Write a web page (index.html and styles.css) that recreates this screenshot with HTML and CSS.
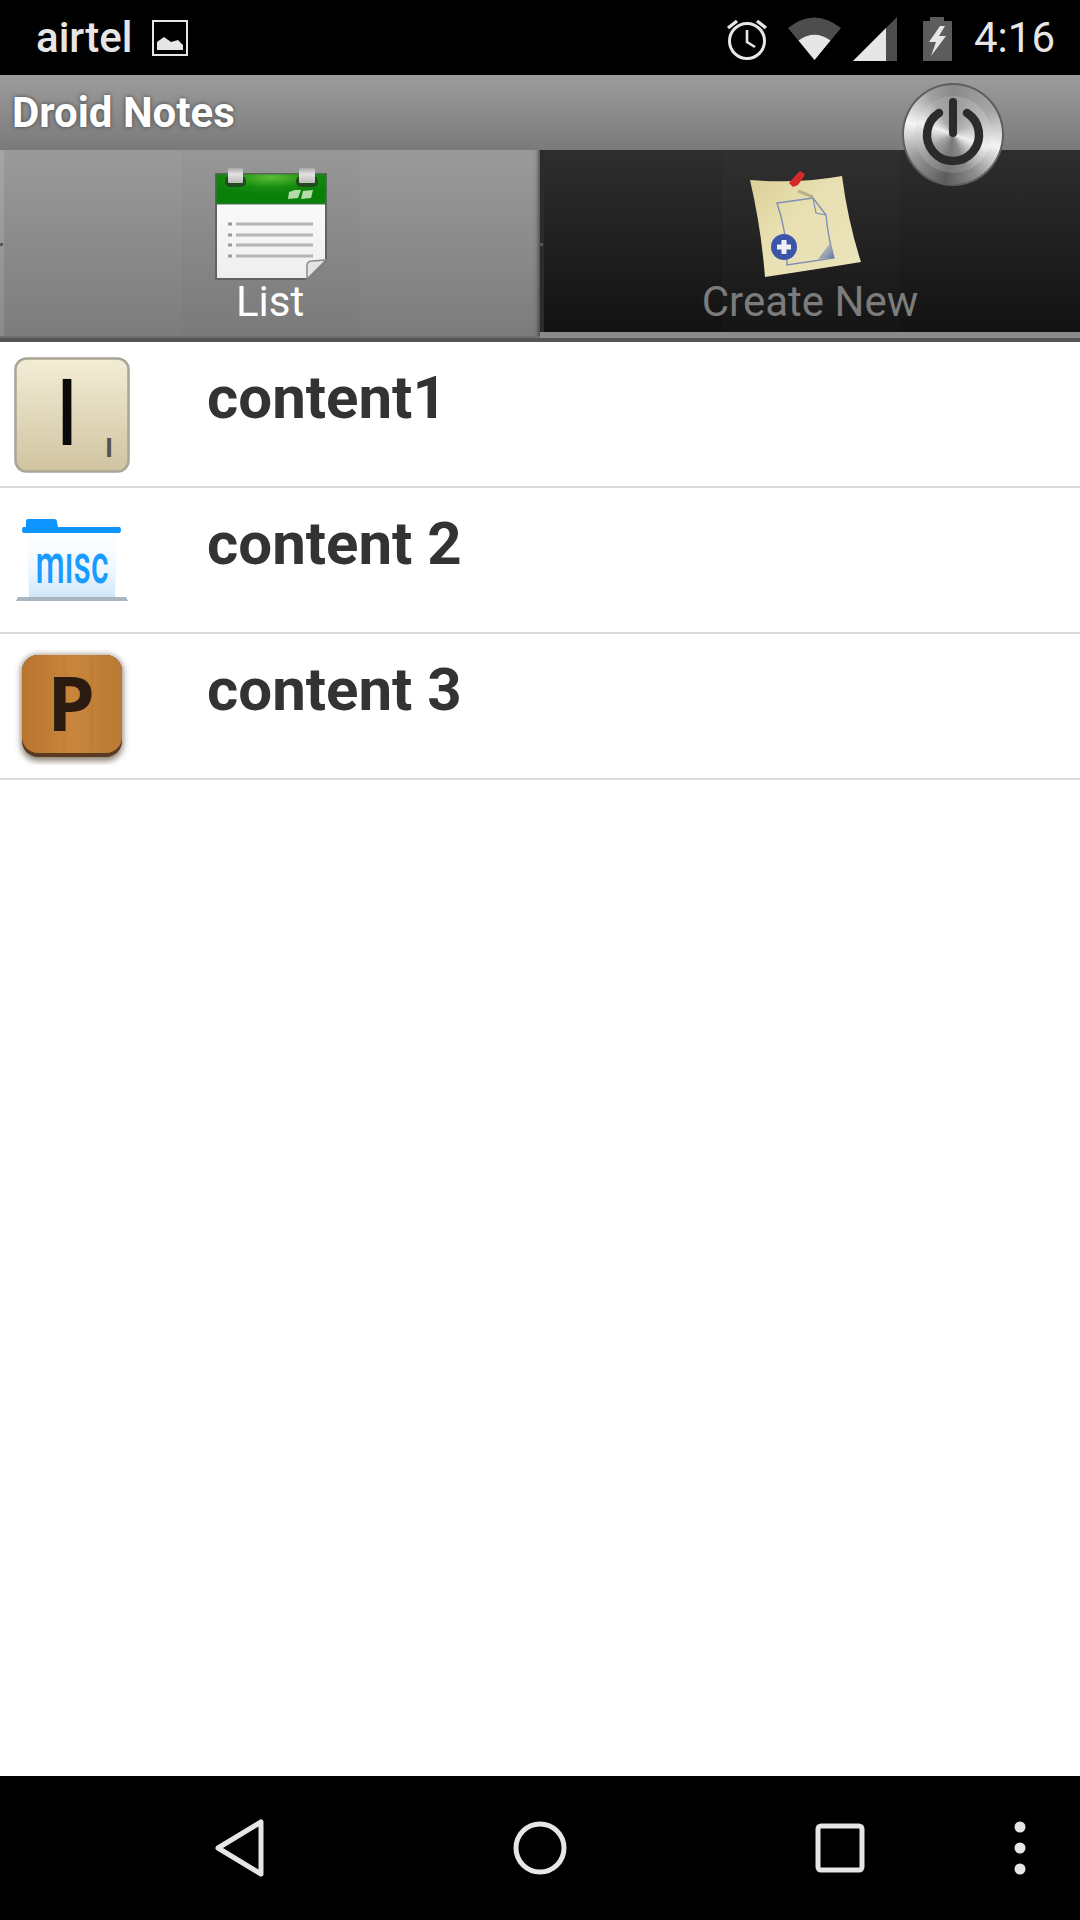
FILE: index.html
```html
<!DOCTYPE html>
<html lang="en">
<head>
    <meta charset="UTF-8">
    <meta name="viewport" content="width=device-width, initial-scale=1.0">
    <title>Droid Notes</title>
    <link rel="stylesheet" href="styles.css">
</head>
<body>
    <div class="phone">
        <header class="status-bar">
            <div class="status-left">
                <span class="carrier">airtel</span>
                <svg class="picture-icon" width="36" height="36" viewBox="0 0 36 36">
                    <rect x="1" y="1" width="34" height="34" fill="none" stroke="#e6e6e6" stroke-width="2"/>
                    <path d="M5 30V22L12 17L19 22L26 20L31 25V30Z" fill="#e6e6e6"/>
                </svg>
            </div>
            <div class="status-right">
                <svg class="alarm-icon" width="44" height="44" viewBox="0 0 44 44">
                    <circle cx="22" cy="24" r="17.5" fill="none" stroke="#e6e6e6" stroke-width="3"/>
                    <path d="M22 13V25L30 30" fill="none" stroke="#e6e6e6" stroke-width="2.6"/>
                    <path d="M3 11L12 4M41 11L32 4" stroke="#e6e6e6" stroke-width="3.4"/>
                </svg>
                <svg class="wifi-icon" width="53" height="44" viewBox="0 0 53 44">
                    <path d="M0 11Q26 -10 53 11L26.5 43Z" fill="#4d4d4d"/>
                    <path d="M10.5 23.5Q26.5 12 42.5 23.5L26.5 43Z" fill="#e6e6e6"/>
                </svg>
                <svg class="signal-icon" width="44" height="44" viewBox="0 0 44 44">
                    <path d="M0 44L44 0V44Z" fill="#4d4d4d"/>
                    <path d="M0 44L33 11V44Z" fill="#e6e6e6"/>
                </svg>
                <svg class="battery-icon" width="29" height="44" viewBox="0 0 29 44">
                    <path d="M7 0H21V4H29V44H0V4H7Z" fill="#5c5c5c"/>
                    <path d="M17 9L6 25H13L8 39L23 19H16L22 9Z" fill="#e6e6e6"/>
                </svg>
                <span class="clock">4:16</span>
            </div>
        </header>

        <div class="title-bar">
            <h1>Droid Notes</h1>
        </div>

        <!-- sits on the line between title bar and tabs -->
        <div class="power-button">
            <div class="power-face">
                <svg width="70" height="82" viewBox="0 0 70 82">
                    <path d="M21 19A26 26 0 1 0 49 19" fill="none" stroke="#2b2b2b" stroke-width="8.5" stroke-linecap="round"/>
                    <path d="M35 8V39" fill="none" stroke="#2b2b2b" stroke-width="8" stroke-linecap="round"/>
                </svg>
            </div>
        </div>

        <nav class="tabs">
            <div class="tab tab-active">
                <svg class="tab-icon" width="116" height="116" viewBox="0 0 116 116">
                    <defs>
                        <radialGradient id="calGreen" cx="0.5" cy="0.1" r="0.6">
                            <stop offset="0" stop-color="#5cbf33"/>
                            <stop offset="0.6" stop-color="#158c10"/>
                            <stop offset="1" stop-color="#0b8008"/>
                        </radialGradient>
                        <linearGradient id="calPage" x1="0" y1="0" x2="0" y2="1">
                            <stop offset="0" stop-color="#ffffff"/>
                            <stop offset="1" stop-color="#eeeeee"/>
                        </linearGradient>
                        <linearGradient id="calClip" x1="0" y1="0" x2="0" y2="1">
                            <stop offset="0" stop-color="#a8a8a8"/>
                            <stop offset="0.4" stop-color="#e2e2e2"/>
                            <stop offset="1" stop-color="#bdbdbd"/>
                        </linearGradient>
                    </defs>
                    <g class="soft-edge">
                        <path d="M4 7H114V93L95 112H4Z" fill="url(#calPage)" stroke="#636363" stroke-width="2"/>
                        <path d="M4 7H114V37H4Z" fill="url(#calGreen)" stroke="#4d6a4a" stroke-width="1"/>
                        <rect x="13" y="9" width="21" height="11" rx="5" fill="#23491f"/>
                        <rect x="84" y="9" width="22" height="11" rx="5" fill="#23491f"/>
                        <rect x="16" y="1" width="15" height="15" rx="1" fill="url(#calClip)"/>
                        <rect x="87" y="1" width="16" height="15" rx="1" fill="url(#calClip)"/>
                        <path d="M77 25L83 23H89L86 31L76 32ZM91 24L101 23L99 31L89 32Z" fill="#b5dba9"/>
                        <path d="M24 57H101M24 68H101M24 78H101M24 89H101" stroke="#b4b6b4" stroke-width="3"/>
                        <path d="M16 57H20M16 68H20M16 78H20M16 89H20" stroke="#9a9a9a" stroke-width="3"/>
                        <path d="M114 93L95 112V99Q95 94 100 94Z" fill="#e4e4e4" stroke="#8a8a8a" stroke-width="1.5"/>
                    </g>
                </svg>
                <span class="tab-label">List</span>
            </div>
            <div class="tab">
                <svg class="tab-icon" width="124" height="116" viewBox="0 0 124 116">
                    <defs>
                        <linearGradient id="noteFill" x1="0" y1="0" x2="1" y2="1">
                            <stop offset="0" stop-color="#dccf96"/>
                            <stop offset="0.4" stop-color="#e8e0b2"/>
                            <stop offset="1" stop-color="#ece4bb"/>
                        </linearGradient>
                        <linearGradient id="noteHatch" x1="0" y1="0" x2="1" y2="1">
                            <stop offset="0" stop-color="#e8e0b2"/>
                            <stop offset="1" stop-color="#5f74ad"/>
                        </linearGradient>
                    </defs>
                    <g class="soft-edge">
                        <path d="M2 13Q50 17 94 9Q100 55 113 95Q70 102 17 110Q13 60 2 13Z" fill="url(#noteFill)"/>
                        <path d="M50 24L65 30" stroke="#b9b08c" stroke-width="3"/>
                        <path d="M29 36L65 31L78 48Q80 70 86 91L39 98Q39 65 29 36Z" fill="none" stroke="#7e8db4" stroke-width="1.4"/>
                        <path d="M65 31L68 46L78 48" fill="none" stroke="#7e8db4" stroke-width="1.2"/>
                        <path d="M70 92L82 76L86 91Z" fill="url(#noteHatch)"/>
                        <circle cx="36" cy="80" r="13" fill="#3d55a8"/>
                        <path d="M36 73V87M29 80H43" stroke="#eef0f5" stroke-width="5"/>
                        <path d="M41 16L47 9L52 4L57 7L55 11L50 18L45 20Z" fill="#d62a2a"/>
                    </g>
                </svg>
                <span class="tab-label">Create New</span>
            </div>
        </nav>

        <main class="note-list">
            <div class="note-row">
                <div class="note-thumb">
                    <svg width="116" height="116" viewBox="0 0 116 116">
                        <defs>
                            <linearGradient id="tileCream" x1="0" y1="0" x2="0" y2="1">
                                <stop offset="0" stop-color="#f3edd6"/>
                                <stop offset="1" stop-color="#d0c3a0"/>
                            </linearGradient>
                        </defs>
                        <rect x="1.5" y="1.5" width="113" height="113" rx="11" fill="url(#tileCream)" stroke="#a8a596" stroke-width="2.5"/>
                        <text class="tile-letter" x="53" y="88" text-anchor="middle">I</text>
                        <text class="tile-score" x="95" y="100" text-anchor="middle">I</text>
                    </svg>
                </div>
                <div class="note-title">content1</div>
            </div>
            <div class="note-row">
                <div class="note-thumb">
                    <svg width="116" height="116" viewBox="0 0 116 116">
                        <defs>
                            <linearGradient id="folderFill" x1="0" y1="0" x2="0" y2="1">
                                <stop offset="0" stop-color="#ffffff"/>
                                <stop offset="0.6" stop-color="#eef7fe"/>
                                <stop offset="1" stop-color="#cfe6f8"/>
                            </linearGradient>
                        </defs>
                        <path d="M13 30H103L101 94H15Z" fill="url(#folderFill)"/>
                        <path class="soft-edge" d="M4 94H112L114 98H2Z" fill="#a9b6c2"/>
                        <path d="M12 18Q12 16 14 16H40Q43 16 43 19L44 24H106Q108 27 106 30H9Q7 27 9 24H12Z" fill="#0f95ff"/>
                        <text class="folder-text" transform="translate(58 80) scale(0.8 1.33)" text-anchor="middle">mısc</text>
                    </svg>
                </div>
                <div class="note-title">content 2</div>
            </div>
            <div class="note-row">
                <div class="note-thumb">
                    <svg width="116" height="116" viewBox="0 0 116 116">
                        <defs>
                            <linearGradient id="woodFill" x1="0" y1="0" x2="1" y2="0">
                                <stop offset="0" stop-color="#b8752f"/>
                                <stop offset="0.5" stop-color="#c9853c"/>
                                <stop offset="1" stop-color="#b97a35"/>
                            </linearGradient>
                        </defs>
                        <rect class="soft-shadow" x="7" y="6" width="102" height="106" rx="17" fill="#8a8074"/>
                        <rect x="8" y="6" width="100" height="102" rx="16" fill="#5a3a20"/>
                        <rect x="8" y="6" width="100" height="98" rx="16" fill="url(#woodFill)"/>
                        <path d="M28 8V102M50 8V102M78 8V102M92 8V102" stroke="#a9682a" stroke-width="1" opacity="0.4"/>
                        <text class="wood-letter" x="57" y="82" text-anchor="middle">P</text>
                    </svg>
                </div>
                <div class="note-title">content 3</div>
            </div>
        </main>

        <footer class="nav-bar">
            <svg width="50" height="58" viewBox="0 0 50 58">
                <path d="M46 3V55L3 29Z" fill="none" stroke="#e6e6e6" stroke-width="5" stroke-linejoin="round"/>
            </svg>
            <svg width="54" height="54" viewBox="0 0 54 54">
                <circle cx="27" cy="27" r="24" fill="none" stroke="#e6e6e6" stroke-width="5"/>
            </svg>
            <svg width="50" height="50" viewBox="0 0 50 50">
                <rect x="3" y="3" width="44" height="44" rx="3" fill="none" stroke="#e6e6e6" stroke-width="5"/>
            </svg>
            <svg width="12" height="54" viewBox="0 0 12 54">
                <circle cx="6" cy="6" r="5.5" fill="#e6e6e6"/>
                <circle cx="6" cy="27" r="5.5" fill="#e6e6e6"/>
                <circle cx="6" cy="48" r="5.5" fill="#e6e6e6"/>
            </svg>
        </footer>
    </div>
</body>
</html>
```

FILE: styles.css
```css
* {
    margin: 0;
    padding: 0;
    box-sizing: border-box;
}

body {
    font-family: Roboto, "Liberation Sans", sans-serif;
    background-color: #fff;
}

.phone {
    position: relative;
    display: flex;
    flex-direction: column;
    width: 1080px;
    height: 1920px;
    overflow: hidden;
}

/* status bar */
.status-bar {
    display: flex;
    justify-content: space-between;
    align-items: center;
    height: 75px;
    padding: 0 25px 0 36px;
    background-color: #000;
    color: #e6e6e6;
}

.status-left,
.status-right {
    display: flex;
    align-items: center;
}

.carrier {
    font-size: 42px;
    font-weight: 500;
}

.picture-icon {
    margin-left: 20px;
    margin-top: 1px;
}

.alarm-icon {
    margin-right: 19px;
    margin-top: 2px;
}

.wifi-icon {
    margin-right: 12px;
    margin-top: 2px;
}

.signal-icon {
    margin-right: 26px;
    margin-top: 2px;
}

.battery-icon {
    margin-right: 22px;
    margin-top: 2px;
}

.clock {
    font-size: 42px;
}

/* title bar */
.title-bar {
    display: flex;
    align-items: center;
    height: 75px;
    padding-left: 12px;
    background: linear-gradient(#9c9c9c, #7a7a7a);
}

.title-bar h1 {
    font-size: 42px;
    font-weight: 700;
    color: #fff;
    text-shadow: 0 0 4px #444;
}

.power-button {
    position: absolute;
    z-index: 1;
    left: 902px;
    top: 83px;
    width: 102px;
    height: 103px;
    padding: 11px;
    border-radius: 50%;
    border: 2px solid #5e5e5e;
    background: conic-gradient(#8a8a8a, #a8a8a8 60deg, #f4f4f4 105deg, #8e8e8e 150deg, #5c5c5c 190deg, #9a9a9a 240deg, #f6f6f6 285deg, #a0a0a0 330deg, #8a8a8a);
}

.power-face {
    display: flex;
    align-items: center;
    justify-content: center;
    width: 100%;
    height: 100%;
    border-radius: 50%;
    background: conic-gradient(#999, #b8b8b8 60deg, #f0f0f0 110deg, #8c8c8c 160deg, #777 190deg, #a4a4a4 240deg, #f0f0f0 290deg, #a8a8a8 330deg, #999);
}

.power-face svg {
    flex: none;
}

/* tabs */
.tabs {
    display: flex;
    height: 192px;
    border-bottom: 4px solid #555;
}

.tab {
    position: relative;
    display: flex;
    flex-direction: column;
    align-items: center;
    width: 540px;
    height: 188px;
    padding-top: 17px;
    border-bottom: 6px solid #8a8a8a;
    box-shadow: inset 4px 0 0 #2b2b2b;
    background:
        linear-gradient(90deg, transparent 182px, rgba(255, 255, 255, 0.012) 182px, rgba(255, 255, 255, 0.012) 359px, transparent 359px),
        linear-gradient(#2e2e2e, #121212);
}

.tab-active {
    border-bottom: 2px solid #6f6f6f;
    box-shadow: inset 4px 0 0 rgba(255, 255, 255, 0.12), inset -6px 0 5px -5px #333;
    background:
        linear-gradient(90deg, transparent 182px, rgba(0, 0, 0, 0.02) 182px, rgba(0, 0, 0, 0.02) 359px, transparent 359px),
        linear-gradient(#9a9a9a, #7c7c7c);
}

/* little nick on the tab edge, from the nine-patch */
.tab::before {
    content: "";
    position: absolute;
    left: 0;
    top: 93px;
    width: 3px;
    height: 3px;
    background-color: #555;
}

.tab-icon {
    flex: none;
}

.tab-label {
    margin-top: -5px;
    font-size: 42px;
    line-height: 48px;
    color: #7c7c7c;
}

.tab-active .tab-label {
    color: #fff;
}

.soft-edge {
    filter: blur(0.6px);
}

.soft-shadow {
    filter: blur(3px);
}

/* list */
.note-list {
    flex: 1;
    background-color: #fff;
}

.note-row {
    display: flex;
    height: 146px;
    padding-top: 15px;
    border-bottom: 2px solid #d9d9d9;
}

.note-thumb {
    flex: none;
    width: 207px;
    padding-left: 14px;
}

.note-title {
    margin-top: 6px;
    font-size: 60px;
    line-height: 70px;
    font-weight: 700;
    color: #333;
}

.tile-letter {
    font-size: 92px;
    font-weight: 400;
    fill: #0a0a0a;
}

.tile-score {
    font-size: 26px;
    font-weight: 700;
    fill: #55534c;
}

.folder-text {
    font-size: 42px;
    font-weight: 500;
    fill: #1a9bff;
}

.wood-letter {
    font-family: "Open Sans", sans-serif;
    font-size: 76px;
    font-weight: 700;
    fill: #2b1a10;
}

/* bottom nav */
.nav-bar {
    display: grid;
    grid-template-columns: repeat(3, 300px) 60px;
    justify-items: center;
    align-items: center;
    height: 144px;
    padding-left: 90px;
    background-color: #000;
}
```
